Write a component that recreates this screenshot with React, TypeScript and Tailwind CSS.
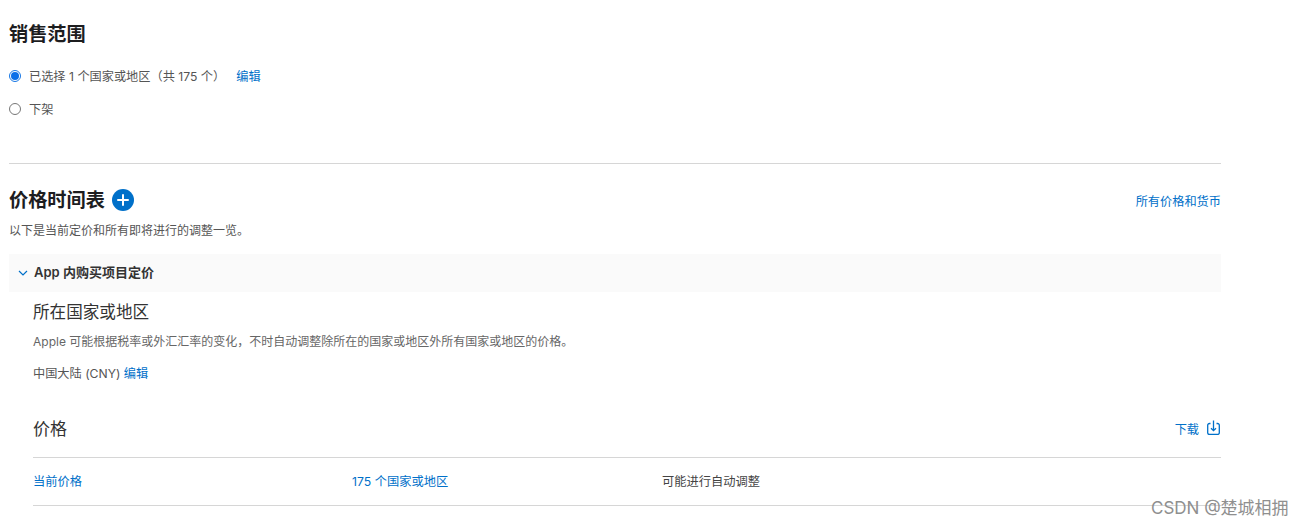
import React from 'react';

const font = { fontFamily: '"Inter", "Noto Sans CJK SC", sans-serif' };

const Radio: React.FC<{ checked?: boolean; label: React.ReactNode }> = ({ checked, label }) => (
  <div className="flex items-center h-4 text-[12.2px] text-[#555]">
    {checked ? (
      <span className="w-3 h-3 rounded-full border border-[#1677e5] flex items-center justify-center">
        <span className="w-2 h-2 rounded-full bg-[#0a6fe8]"></span>
      </span>
    ) : (
      <span className="w-3 h-3 rounded-full border border-[#777]"></span>
    )}
    <span className="ml-2 pt-[2px]">{label}</span>
  </div>
);

const App: React.FC = () => {
  return (
    <div className="relative h-[526px] w-[1302px] overflow-hidden bg-white" style={font}>
      <div className="w-[1221px] pl-[9px]">
        {/* Sales range */}
        <h2 className="pt-[22px] h-[68px] text-[19.2px] leading-[25px] font-bold text-[#1d1d1f]">销售范围</h2>
        <Radio
          checked
          label={
            <>
              已选择 1 个国家或地区（共 175 个）<a className="ml-[11px] text-[#0070c9]">编辑</a>
            </>
          }
        />
        <div className="mt-[17px]">
          <Radio label="下架" />
        </div>
        <div className="mt-[46px] border-t border-[#d6d6d6]"></div>

        {/* Price schedule */}
        <div className="mt-[24px] flex items-center justify-between h-6">
          <div className="flex items-center">
            <h2 className="text-[19.2px] leading-6 font-bold text-[#1d1d1f]">价格时间表</h2>
            <span className="ml-[7px] w-[22px] h-[22px] rounded-full bg-[#0070c9] flex items-center justify-center">
              <svg width="12" height="12" viewBox="0 0 12 12">
                <path d="M6 1v10M1 6h10" stroke="#fff" strokeWidth="2" strokeLinecap="round" />
              </svg>
            </span>
          </div>
          <a className="text-[12.2px] text-[#0070c9] mt-1">所有价格和货币</a>
        </div>
        <p className="mt-[11px] text-[12px] leading-4 text-[#555]">以下是当前定价和所有即将进行的调整一览。</p>

        <div className="mt-[15px] h-[38px] bg-[#fafafa] flex items-center pl-[9px]">
          <svg width="10" height="6" viewBox="0 0 10 6" fill="none">
            <path d="M1 1l4 4 4-4" stroke="#0070c9" strokeWidth="1.2" />
          </svg>
          <span className="ml-[6px] text-[13px] font-semibold text-[#333]">App 内购买项目定价</span>
        </div>

        <div className="pl-[24px]">
          <h3 className="mt-[8px] text-[16.6px] leading-6 text-[#333]">所在国家或地区</h3>
          <p className="mt-[10px] text-[12px] leading-4 text-[#666]">
            Apple 可能根据税率或外汇汇率的变化，不时自动调整除所在的国家或地区外所有国家或地区的价格。
          </p>
          <p className="mt-[16px] text-[12.2px] leading-4 text-[#555]">
            中国大陆 (CNY) <a className="text-[#0070c9]">编辑</a>
          </p>
          <div className="mt-[34px] flex items-center justify-between h-6">
            <h3 className="pt-[1px] text-[17px] leading-6 text-[#333]">价格</h3>
            <a className="flex items-center text-[12.2px] text-[#0070c9] mr-[1px]">
              <span className="mt-[5px]">下载</span>
              <svg className="ml-[8px]" width="13" height="15" viewBox="0 0 13 15" fill="none" stroke="#0070c9" strokeWidth="1.3">
                <path d="M3.500 3.500H2.500a1.800 1.800 0 0 0-1.800 1.800v7.400a1.800 1.800 0 0 0 1.800 1.800h8a1.800 1.800 0 0 0 1.800-1.800V5.300a1.800 1.800 0 0 0-1.800-1.800H9.500" />
                <path d="M6.500 .5v10M4 8.200l2.500 2.500L9 8.200" />
              </svg>
            </a>
          </div>
          <div className="mt-[17px] border-t border-[#d6d6d6]"></div>
          <div className="h-[47px] pt-[1px] grid grid-cols-[319px_310px_1fr] items-center text-[12.25px]">
            <a className="text-[#0070c9]">当前价格</a>
            <a className="text-[#0070c9]">175 个国家或地区</a>
            <span className="text-[#444]">可能进行自动调整</span>
          </div>
          <div className="border-t border-[#d6d6d6]"></div>
        </div>
      </div>

      {/* Watermark */}
      <span className="absolute left-[1151px] top-[497px] text-[17px] leading-[22px] text-[#8f8f8f]">CSDN @楚城相拥</span>
    </div>
  );
};

export default App;
